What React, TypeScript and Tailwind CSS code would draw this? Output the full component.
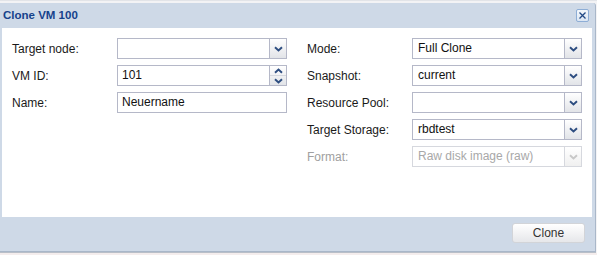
import React from "react";

const font = { fontFamily: '"Liberation Sans", Arial, sans-serif' };

function Chevron({ up, disabled }: { up?: boolean; disabled?: boolean }) {
    return (
        <svg width="9" height="6" viewBox="0 0 9 6" className={up ? "rotate-180" : ""}>
            <path
                d="M1 1.2 L4.5 4.5 L8 1.2"
                fill="none"
                stroke={disabled ? "#c8c8c8" : "#2d4d80"}
                strokeWidth="1.9"
            />
        </svg>
    );
}

function Combo({ value, disabled }: { value?: string; disabled?: boolean }) {
    return (
        <div
            className={`flex h-[21px] w-[170px] border bg-white ${
                disabled ? "border-[#d6d8de]" : "border-[#b5b8c8]"
            }`}
        >
            <div
                className={`flex-1 pl-[5px] text-[12px] leading-[19px] ${
                    disabled ? "text-[#a8a8a8]" : "text-[#111]"
                }`}
            >
                {value}
            </div>
            <div
                className={`flex w-[17px] items-center justify-center border-l bg-gradient-to-b from-[#ffffff] to-[#e2e4e8] ${
                    disabled ? "border-[#d6d8de] from-[#fafafa] to-[#f0f0f0]" : "border-[#b5b8c8]"
                }`}
            >
                <Chevron disabled={disabled} />
            </div>
        </div>
    );
}

function Spinner({ value }: { value: string }) {
    return (
        <div className="flex h-[21px] w-[170px] border border-[#b5b8c8] bg-white">
            <div className="flex-1 pl-[4px] text-[12px] leading-[19px] text-[#111]">{value}</div>
            <div className="flex w-[17px] flex-col border-l border-[#b5b8c8] bg-gradient-to-b from-[#ffffff] to-[#e2e4e8]">
                <div className="flex flex-1 items-center justify-center border-b border-[#d4d7de]">
                    <Chevron up />
                </div>
                <div className="flex flex-1 items-center justify-center">
                    <Chevron />
                </div>
            </div>
        </div>
    );
}

function TextField({ value }: { value: string }) {
    return (
        <div className="h-[21px] w-[170px] border border-[#b5b8c8] bg-white pl-[4px] text-[12px] leading-[19px] text-[#111]">
            {value}
        </div>
    );
}

function Row({ label, disabled, children }: { label: string; disabled?: boolean; children: React.ReactNode }) {
    return (
        <div className="flex h-[21px] items-center">
            <div className={`w-[105px] text-[12px] ${disabled ? "text-[#a0a0a0]" : "text-[#1a1a1a]"}`}>{label}</div>
            {children}
        </div>
    );
}

export default function App() {
    return (
        <div className="flex h-[255px] w-[597px] flex-col bg-[#f3f3f5]" style={font}>
            <div className="h-[3px] shrink-0 border-t border-[#e2e4e8]" />
            <div className="flex h-[249px] w-[596px] shrink-0 flex-col rounded-tr-[3px] border-r border-b border-[#a9b7c9] bg-[#ced9e7]">
                {/* header */}
                <div className="flex h-[25px] shrink-0 items-center justify-between pl-[3px] pr-[6px]">
                    <span className="text-[11.5px] font-bold text-[#15428b]">Clone VM 100</span>
                    <div className="flex h-[13px] w-[13px] items-center justify-center rounded-[2px] border border-[#8eaed6] bg-gradient-to-b from-[#f4f8fc] to-[#dbe6f3]">
                        <svg width="9" height="9" viewBox="0 0 9 9">
                            <path d="M1.5 1.5 L7.5 7.5 M7.5 1.5 L1.5 7.5" stroke="#234a86" strokeWidth="1.3" />
                        </svg>
                    </div>
                </div>

                {/* body */}
                <div className="ml-[2px] mr-[3px] flex h-[189px] shrink-0 gap-[20px] bg-white pl-[10px] pt-[10px]">
                    <div className="flex flex-col gap-[6px]">
                        <Row label="Target node:">
                            <Combo />
                        </Row>
                        <Row label="VM ID:">
                            <Spinner value="101" />
                        </Row>
                        <Row label="Name:">
                            <TextField value="Neuername" />
                        </Row>
                    </div>
                    <div className="flex flex-col gap-[6px]">
                        <Row label="Mode:">
                            <Combo value="Full Clone" />
                        </Row>
                        <Row label="Snapshot:">
                            <Combo value="current" />
                        </Row>
                        <Row label="Resource Pool:">
                            <Combo />
                        </Row>
                        <Row label="Target Storage:">
                            <Combo value="rbdtest" />
                        </Row>
                        <Row label="Format:" disabled>
                            <Combo value="Raw disk image (raw)" disabled />
                        </Row>
                    </div>
                </div>

                {/* footer */}
                <div className="flex flex-1 items-start justify-end pr-[10px] pt-[6px]">
                    <button className="h-[20px] w-[73px] rounded-[3px] border border-[#d2d4d8] bg-gradient-to-b from-[#ffffff] to-[#e6e7ea] text-[12px] text-[#333]">
                        Clone
                    </button>
                </div>
            </div>
            <div className="h-[1px] w-[596px] shrink-0 bg-[#b9bfc8]" />
            <div className="flex-1 bg-[#f4eded]" />
        </div>
    );
}
